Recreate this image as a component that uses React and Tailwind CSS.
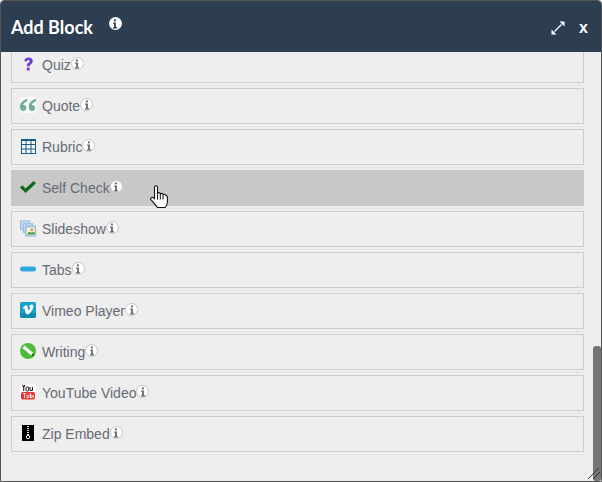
import React from "react";

function Info({ light }) {
  return (
    <span className={light
      ? "flex h-[13px] w-[13px] items-center justify-center rounded-full bg-white text-[#2c3e50]"
      : "flex h-[13px] w-[13px] items-center justify-center rounded-full border border-[#c6c6c6] bg-white text-[#666]"}>
      <svg width="10" height="10" viewBox="0 0 9 9" aria-hidden="true">
        <rect x="3.500" y="0.400" width="1.800" height="1.700" fill="currentColor" />
        <path d="M2.800 3.200h2.500v4.200h1.100v1.100H2.700V7.400h1V4.300h-.9z" fill="currentColor" />
      </svg>
    </span>
  );
}

const Q = () => (
  <svg width="9" height="14" viewBox="4.300 1.500 7.800 11.700"><path d="M4.500 4.800C4.800 2.700 6.300 1.700 8.200 1.700c2.300 0 3.700 1.200 3.700 3.100 0 1.400-.8 2.200-1.700 2.900-.7.500-1 .9-1 1.600H6.800c-.1-1.400.3-2.100 1.100-2.800.7-.5 1.200-1 1.200-1.600 0-.7-.4-1-1-1-.7 0-1.100.4-1.200 1.200zM6.700 10.400h2.500V13H6.700z" fill="#6a3fd0" /></svg>
);
const Quote = () => (
  <svg width="16" height="16" viewBox="0 0 16 16"><rect width="16" height="16" fill="#f8fbf9" /><path d="M7.300 1.800C3.300 3 0 5.800 0 10c0 2.500 1.300 4 3.300 4 1.800 0 3.100-1.200 3.100-3 0-1.700-1.200-2.900-2.800-2.900-.3 0-.5 0-.7.100.4-1.800 2.200-3.200 4.400-4zM16 1.800C12 3 8.700 5.800 8.700 10c0 2.500 1.300 4 3.300 4 1.800 0 3.100-1.200 3.100-3 0-1.700-1.200-2.900-2.800-2.900-.3 0-.5 0-.7.100.4-1.800 2.200-3.200 4.400-4z" fill="#74ab96" /></svg>
);
const Rubric = () => (
  <svg width="15" height="15" viewBox="0 0 15 15"><rect x="0.500" y="0.500" width="14" height="14" fill="#f2f7fb" stroke="#1d5a80" /><rect x="0" y="0" width="15" height="2" fill="#1d5a80" /><path d="M0 5.500h15M0 10h15M5 0v15M10 0v15" stroke="#1d5a80" fill="none" /></svg>
);
const Check = () => (
  <svg width="17" height="17" viewBox="0 0 16 16"><path d="M0 8l2.300-2.300 3.200 3.200L13.600 1.400 16 3.700 5.700 13.600z" fill="#0b6b16" /></svg>
);
const Slides = () => (
  <svg width="17" height="17" viewBox="0 0 17 17">
    <rect x="0.500" y="0.500" width="10" height="9" fill="#c3d8ee" stroke="#94b8dc" />
    <rect x="3.500" y="3.500" width="10" height="9" fill="#c3d8ee" stroke="#94b8dc" />
    <rect x="6" y="6" width="10.500" height="10.500" fill="#c3d8ee" stroke="#94b8dc" />
    <rect x="7.500" y="8" width="8" height="7" fill="#f3f6da" />
    <path d="M7.500 15l2-3 3 1 3-1v3z" fill="#3e9a2c" />
    <circle cx="12.500" cy="10" r="1.500" fill="#ec9432" />
  </svg>
);
const Tabs = () => (
  <svg width="16" height="16" viewBox="0 0 16 16"><rect x="0" y="5.500" width="16" height="5" rx="2.500" fill="#2ea9e0" /></svg>
);
const Vimeo = () => (
  <svg width="16" height="16" viewBox="0 0 16 16"><rect width="16" height="16" rx="2" fill="#14a3cc" /><rect y="11" width="16" height="5" rx="2" fill="#0f8bb0" /><path d="M2.700 5.800C4.200 4.400 5.300 3.300 6.200 3.300c1.200 0 1.300 1.300 1.500 2.700.2 1 .4 2.300.8 2.300.5 0 1.700-2 1.700-2.700 0-.8-.7-.8-1.300-.5.5-1.700 1.700-2.500 3-2.500 1.300.1 1.800 1 1.600 2.400-.3 2-3.800 7.500-6 7.500-2.300 0-2.300-6.300-3.400-6.300-.4 0-.8.400-1.300.6z" fill="#fff" /></svg>
);
const Writing = () => (
  <svg width="16" height="16" viewBox="0 0 16 16"><circle cx="8" cy="8" r="8" fill="#4ebb3c" /><path d="M4.600 2.500l8.800 7.400-2.200 2.600-8.800-7.400z" fill="#eef8ea" /><path d="M11.200 12.500l2.200-2.600.7 3.300z" fill="#1d5a17" /></svg>
);
const YouTube = () => (
  <svg width="16" height="16" viewBox="0 0 16 16">
    <rect width="16" height="16" fill="#fff" />
    <rect x="1" y="8" width="14" height="7.500" rx="1.500" fill="#ea3434" />
    <path d="M2.500 1l1.200 2.500L5 1M3.700 3.500V7" stroke="#2a1d1d" strokeWidth="1.100" fill="none" />
    <rect x="6" y="3" width="2.600" height="4" rx="1" stroke="#2a1d1d" fill="none" />
    <path d="M10 3v3.500h2.500V3" stroke="#2a1d1d" fill="none" />
    <path d="M3 9.500h3M4.500 9.500V14M7 10.500V13.500H9V10.500M10.500 9v5M10.500 11.500h1.700V13.500H10.500M13.500 11.200v2.500" stroke="#fff" strokeWidth="0.800" fill="none" />
  </svg>
);
const Zip = () => (
  <svg width="12" height="16" viewBox="0 0 12 16"><rect width="12" height="16" fill="#000" /><path d="M5 1.500h2M5 3.500h2M5 5.500h2M5 7.500h2" stroke="#ddd" strokeWidth="1" /><circle cx="6" cy="12" r="1.700" stroke="#eee" fill="none" /><rect x="5" y="9" width="2" height="1.500" fill="#eee" /></svg>
);

const rows = [
  ["Quiz", Q],
  ["Quote", Quote],
  ["Rubric", Rubric],
  ["Self Check", Check],
  ["Slideshow", Slides],
  ["Tabs", Tabs],
  ["Vimeo Player", Vimeo],
  ["Writing", Writing],
  ["YouTube Video", YouTube],
  ["Zip Embed", Zip],
];

function Row({ label, Icon }) {
  const hover = label === "Self Check";
  return (
    <li className="mb-[2px] border-b border-[#e4e4e4] pb-[2px]">
      <div className={hover
        ? "relative flex h-[36px] items-center border border-[#c8c8c8] bg-[#c8c8c8] pl-[8px]"
        : "relative flex h-[36px] items-center border border-[#cccccc] bg-[#eeeeee] pl-[8px]"}>
        <span className="flex w-[16px] -translate-y-[1px] justify-center"><Icon /></span>
        <span className="ml-[6px] text-[14px] leading-[20px] text-[#666b75]">{label}</span>
        <span className="-mt-[3px]"><Info /></span>
      </div>
    </li>
  );
}

export default function App() {
  return (
    <div className="relative h-[482px] w-[602px] overflow-hidden rounded-t-[4px] border border-[#555555] bg-[#eeeeee] font-['Liberation_Sans',sans-serif]">
      <header className="flex h-[51px] items-center bg-[#2c3e50] pl-[10px] pr-[13px] text-white">
        <h1 className="font-['Lato',sans-serif] text-[18px] font-bold leading-[24px]">Add Block</h1>
        <span className="-mt-[6px] ml-[16px]"><Info light /></span>
        <div className="ml-auto flex items-center gap-[14px] pt-[3px]">
          <svg width="14" height="14" viewBox="0 0 14 14" aria-hidden="true">
            <path d="M3.500 10.500l7-7" stroke="#fff" strokeWidth="1.200" fill="none" />
            <path d="M8.500 0.500H13.500V5.500zM0.500 8.500V13.500H5.500z" fill="#fff" />
          </svg>
          <span className="text-[16px] font-bold leading-[20px]">x</span>
        </div>
      </header>
      <div className="h-[429px] overflow-hidden pl-[10px] pr-[17px]">
        <ul className="-mt-[5px]">
          {rows.map(([label, Icon]) => <Row key={label} label={label} Icon={Icon} />)}
        </ul>
      </div>
      <div className="absolute bottom-0 right-0 h-[135px] w-[8px] rounded-[3px] bg-[#757575]" />
      <svg className="absolute bottom-0 right-0" width="14" height="14" viewBox="0 0 14 14" aria-hidden="true">
        <path d="M1 12L12 1M6 12l7-7" stroke="#333" strokeWidth="1" fill="none" />
      </svg>
      <svg className="absolute left-[149px] top-[184px]" width="18" height="24" viewBox="0 0 18 24" aria-hidden="true">
        <path d="M4.500 2.200a1.500 1.500 0 0 1 3 0V9a1.400 1.400 0 0 1 2.800 0v.8a1.400 1.400 0 0 1 2.800 0v.8a1.400 1.400 0 0 1 2.800 0c.8 0 1.500.6 1.500 1.500v5c0 2.400-1.200 4.200-2.300 5.400H7.500c-.8-.9-2.500-3.400-6.400-7.600-1.300-1.600.6-3.300 2.200-2.200l1.200 1.100z" fill="#fff" stroke="#111" strokeWidth="1.100" strokeLinejoin="round" />
        <path d="M7.500 9.500v5M10.300 10v4.500M13.100 11v3.500" stroke="#111" strokeWidth="1" fill="none" />
      </svg>
    </div>
  );
}
